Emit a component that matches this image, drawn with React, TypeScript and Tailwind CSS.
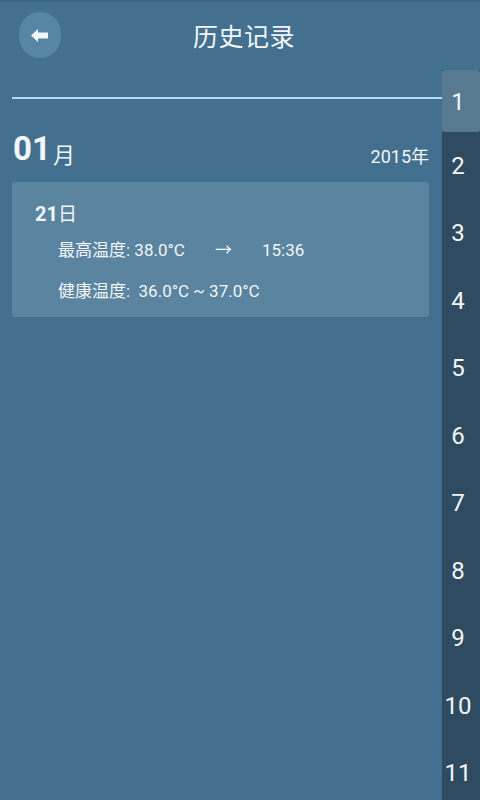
import React from "react"

const font = { fontFamily: 'Roboto, "Noto Sans CJK SC", sans-serif' }

export default function App() {
  const months = [1, 2, 3, 4, 5, 6, 7, 8, 9, 10, 11, 12]

  return (
    <div className="w-[480px] h-[800px] overflow-hidden bg-[#43708f] text-[#f2f6f8] flex flex-col" style={font}>
      <div className="h-[2px] bg-[#3b6682]" />
      {/* header */}
      <div className="h-[68px] relative flex items-center justify-center">
        <button className="absolute left-[19px] top-[10px] w-[42px] h-[46px] rounded-full bg-[#5785a5] flex items-center justify-center">
          <svg width="18" height="13" viewBox="0 0 18 13" fill="#f4f7f9">
            <path d="M0 6.5 L7 0 L7 3.5 L17 3.5 L17 9.5 L7 9.5 L7 13 Z" />
          </svg>
        </button>
        <h1 className="text-[25px] leading-none ml-[8px] mt-[2px] tracking-[0.5px]">历史记录</h1>
      </div>

      <div className="flex flex-1 min-h-0">
        {/* main */}
        <div className="flex-1 flex flex-col">
          <div className="mt-[27px] ml-[12px] h-[1.5px] bg-[#b3dcf2]" />
          <div className="flex items-end justify-between pl-[13px] pr-[13px] mt-[33px]">
            <div className="flex items-end leading-none">
              <span className="text-[33px] font-bold">01</span>
              <span className="text-[22px] ml-[2px] mb-[-2px]">月</span>
            </div>
            <span className="text-[18px] leading-none mb-[-1px]">2015年</span>
          </div>
          <div className="mx-[12px] mr-[13px] mt-[17px] h-[135px] rounded-[3px] bg-[#5b84a0] pt-[22px]">
            <div className="pl-[23px] flex items-end leading-none">
              <span className="text-[20px] font-bold">21</span>
              <span className="text-[19px]">日</span>
            </div>
            <div className="pl-[46px] mt-[18px] flex items-center text-[17px] leading-none">
              <span className="w-[157px]">最高温度: 38.0°C</span>
              <span className="w-[47px]">→</span>
              <span>15:36</span>
            </div>
            <div className="pl-[46px] mt-[24px] text-[17px] leading-none">健康温度:&nbsp; 36.0°C ~ 37.0°C</div>
          </div>
        </div>

        {/* month index */}
        <div className="w-[38px] bg-[#2f4b61] flex flex-col">
          {months.map((m, i) => (
            <div
              key={m}
              className={
                i === 0
                  ? "h-[62px] shrink-0 bg-[#587a90] rounded-[3px] flex items-center justify-center pr-[6px] text-[24px] pt-[2px]"
                  : "h-[67.5px] shrink-0 flex items-center justify-center pr-[6px] text-[24px]"
              }
            >
              {m}
            </div>
          ))}
        </div>
      </div>
    </div>
  )
}
